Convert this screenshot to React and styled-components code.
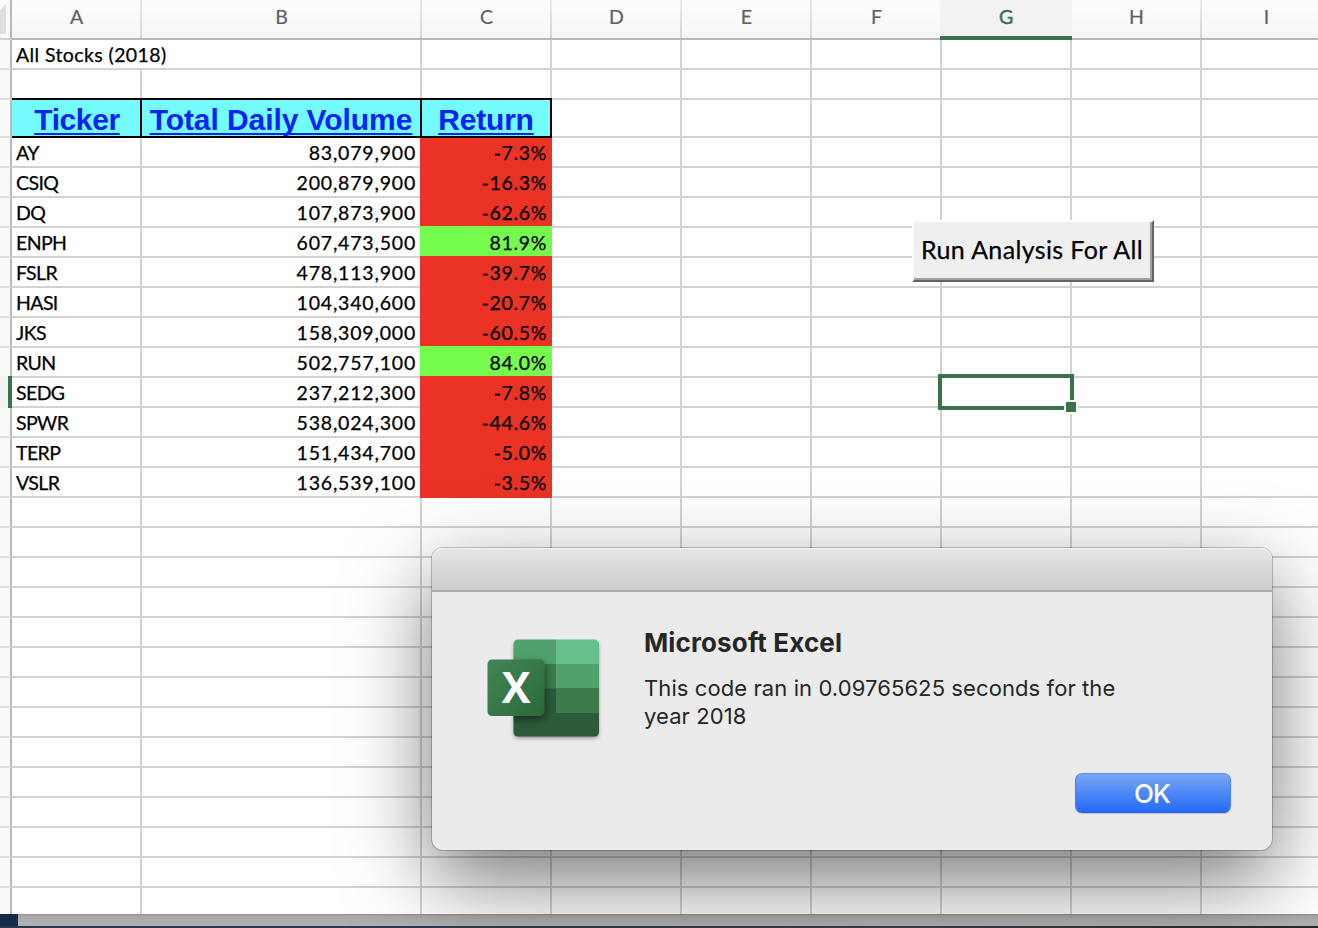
import React from "react";
import styled, { createGlobalStyle, css } from "styled-components";

const GlobalStyle = createGlobalStyle`
  *, *::before, *::after { box-sizing: border-box; }
  html, body { margin: 0; padding: 0; overflow: hidden; }
  body { background: #22303f; }
`;

const GRID = "#d2d2d2";
const GREEN = "#3a7349";
const SHEET_FONT = 'Lato, "Liberation Sans", sans-serif';

const Screen = styled.main`
  position: relative;
  display: flex;
  flex-direction: column;
  width: 1318px;
  height: 928px;
  overflow: hidden;
  font-family: ${SHEET_FONT};
  color: #000;
`;

const Sheet = styled.section`
  height: 914px;
  background: #fff;
  overflow: hidden;
`;

const HeaderRow = styled.div`
  display: flex;
  width: 1332px;
  height: 40px;
`;

const Corner = styled.div`
  display: flex;
  align-items: flex-start;
  width: 12px;
  height: 40px;
  padding-top: 3px;
  background: #fafafa;
  border-right: 2px solid #b9b9b9;
  border-bottom: 2px solid ${GRID};
`;

const ColumnHeader = styled.div`
  display: flex;
  justify-content: center;
  width: ${(p) => p.$width}px;
  height: 40px;
  padding: 5px 1px 0 0;
  font-size: 19.5px;
  line-height: 24px;
  color: #5f5f5f;
  -webkit-text-stroke: 0.2px #5f5f5f;
  background:
    linear-gradient(#ececec, #d4d4d4) right / 2px 100% no-repeat,
    linear-gradient(#fdfdfd, #f6f6f6);
  border-bottom: 2px solid #b7b7b7;
  ${(p) =>
    p.$active &&
    css`
      width: 132px;
      margin-left: -2px;
      padding-right: 0;
      color: ${GREEN};
      -webkit-text-stroke: 0.5px ${GREEN};
      background: #f2f2f2;
      border-bottom: 4px solid ${GREEN};
    `}
`;

const Row = styled.div`
  display: flex;
  width: 1332px;
  height: ${(p) => p.$height || 30}px;
`;

const RowHeader = styled.div`
  width: 12px;
  background: #fafafa;
  border-right: 2px solid #b9b9b9;
  border-bottom: 2px solid #dedede;
  ${(p) =>
    p.$active &&
    css`
      height: 32px;
      margin-top: -2px;
      background: #f2f2f2;
      border-right: 4px solid ${GREEN};
      border-bottom: 0;
    `}
`;

const Cell = styled.div`
  width: ${(p) => p.$width}px;
  padding: 1px 4px 0 4px;
  font-size: 19.5px;
  line-height: 28px;
  white-space: nowrap;
  text-align: ${(p) => p.$align || "left"};
  letter-spacing: ${(p) => p.$spacing || 0}px;
  border-right: 2px solid ${(p) => (p.$open ? "#fff" : GRID)};
  border-bottom: 2px solid ${GRID};
  -webkit-text-stroke: 0.25px #000;
`;

const ReturnCell = styled(Cell)`
  height: 32px;
  margin: -2px 0 0 -2px;
  padding: 3px 5px 0 0;
  border: 0;
  background: ${(p) => (p.$gain ? "#75fb4c" : "#ea3324")};
`;

const TitleRow = styled(Row)`
  position: relative;
  z-index: 1;
`;

const TitleCell = styled.div`
  width: ${(p) => p.$width}px;
  height: 40px;
  margin-top: -2px;
  padding-left: ${(p) => p.$inset || 0}px;
  font-family: "Liberation Sans", Arial, sans-serif;
  font-size: 30px;
  font-weight: 700;
  line-height: 40px;
  letter-spacing: ${(p) => p.$spacing}px;
  text-align: center;
  white-space: nowrap;
  color: #0a22f5;
  background: #74fbfd;
  border: solid #000;
  border-width: 2px 2px 2px 0;
`;

const TitleText = styled.span`
  text-decoration: underline;
  text-decoration-thickness: 2px;
  text-underline-offset: 3px;
  text-decoration-skip-ink: none;
`;

const MacroButton = styled.button`
  position: absolute;
  left: 912px;
  top: 220px;
  width: 242px;
  height: 62px;
  padding: 0 2px 4px 0;
  border: 2px solid;
  border-color: #fff #636363 #636363 #fff;
  box-shadow: inset -2px -2px 0 #a0a0a0;
  background: #efefef;
  font-family: ${SHEET_FONT};
  font-size: 25px;
  line-height: 54px;
  letter-spacing: 0.37px;
  color: #000;
  white-space: nowrap;
  -webkit-text-stroke: 0.25px #000;
`;

const Selection = styled.div`
  position: absolute;
  left: 938px;
  top: 374px;
  width: 136px;
  height: 36px;
  border: 4px solid ${GREEN};
`;

const FillHandle = styled.div`
  position: absolute;
  right: -8px;
  bottom: -8px;
  width: 14px;
  height: 14px;
  background: ${GREEN};
  border: 2px solid #fff;
`;

const WindowEdge = styled.footer`
  display: flex;
  height: 14px;
  padding-bottom: 2px;
  background: linear-gradient(90deg, #27374a, #36404c 70%, #2a2530);
`;

const Desktop = styled.div`
  width: 18px;
  background: #142c4a;
`;

const ScrollStrip = styled.div`
  flex: 1;
  background: linear-gradient(#8e8e8e 0, #a8a8a8 2px, #b3b3b3 12px);
`;

const Dialog = styled.section`
  position: absolute;
  left: 432px;
  top: 548px;
  display: flex;
  flex-direction: column;
  width: 840px;
  height: 302px;
  border-radius: 11px;
  background: #ebebeb;
  box-shadow: 0 0 0 1px rgba(0, 0, 0, 0.22), 0 30px 84px rgba(0, 0, 0, 0.54);
  font-family: Inter, "Liberation Sans", sans-serif;
  color: #262626;
`;

const DialogBar = styled.div`
  height: 44px;
  border-radius: 11px 11px 0 0;
  border-bottom: 2px solid #acacac;
  background: linear-gradient(#e6e6e6, #cdcdcd);
  box-shadow: inset 0 1px 0 #f5f5f5;
`;

const DialogBody = styled.div`
  display: flex;
  padding: 33px 0 0 50px;
`;

const Message = styled.div`
  padding-left: 40px;
`;

const DialogTitle = styled.h1`
  margin: 0;
  font-size: 26px;
  font-weight: 700;
  line-height: 36px;
  letter-spacing: 0.13px;
`;

const DialogText = styled.p`
  width: 490px;
  margin: 13px 0 0;
  font-size: 22px;
  line-height: 28px;
  letter-spacing: 0.09px;
`;

const OkButton = styled.button`
  align-self: flex-end;
  width: 156px;
  height: 40px;
  margin: auto 41px 37px 0;
  padding: 2px 2px 0 0;
  border: 1px solid;
  border-color: #5c98f0 #4482ef #2463e8;
  border-radius: 7px;
  background: linear-gradient(#77a7f5, #2469f7);
  box-shadow: 0 1px 1px rgba(0, 0, 0, 0.18);
  font-family: Inter, "Liberation Sans", sans-serif;
  font-size: 26px;
  font-weight: 500;
  line-height: 36px;
  letter-spacing: -0.8px;
  color: #fff;
`;

const LogoLetter = styled.text`
  font-family: "Open Sans", sans-serif;
  font-size: 43px;
  font-weight: 700;
  fill: #fff;
`;

function ExcelLogo() {
  return (
    <svg width="122" height="120" viewBox="0 0 122 120" aria-hidden="true">
      <defs>
        <linearGradient id="tile" x1="0" y1="0" x2="1" y2="1">
          <stop offset="0" stopColor="#418656" />
          <stop offset="1" stopColor="#2d6938" />
        </linearGradient>
        <clipPath id="book">
          <rect x="31.5" y="14.5" width="85.5" height="97" rx="4.5" />
        </clipPath>
        <filter id="soft" x="-30%" y="-30%" width="160%" height="160%">
          <feGaussianBlur stdDeviation="2" />
        </filter>
        <filter id="wide" x="-30%" y="-30%" width="160%" height="160%">
          <feGaussianBlur stdDeviation="4" />
        </filter>
      </defs>
      <rect x="32" y="18" width="84.5" height="95" rx="4" fill="#000" opacity=".4" filter="url(#soft)" />
      <g clipPath="url(#book)">
        <rect x="31" y="14" width="43" height="25" fill="#50a16b" />
        <rect x="74" y="14" width="44" height="25" fill="#65c189" />
        <rect x="31" y="39" width="43" height="25" fill="#3a7b49" />
        <rect x="74" y="39" width="44" height="25" fill="#50a16b" />
        <rect x="31" y="63.5" width="87" height="50" fill="#2d5b3a" />
        <rect x="74" y="63.5" width="44" height="24.5" fill="#3a7b49" />
        <rect x="6" y="38" width="57" height="56" rx="4" fill="#000" opacity=".5" filter="url(#wide)" />
      </g>
      <rect x="5.5" y="34.5" width="57" height="56.5" rx="4.5" fill="url(#tile)" />
      <LogoLetter x="34" y="78" textAnchor="middle">X</LogoLetter>
    </svg>
  );
}

const columns = [
  ["A", 130], ["B", 280], ["C", 130], ["D", 130], ["E", 130],
  ["F", 130], ["G", 130], ["H", 130], ["I", 130],
];

const stocks = [
  ["AY", "83,079,900", "-7.3%"],
  ["CSIQ", "200,879,900", "-16.3%"],
  ["DQ", "107,873,900", "-62.6%"],
  ["ENPH", "607,473,500", "81.9%"],
  ["FSLR", "478,113,900", "-39.7%"],
  ["HASI", "104,340,600", "-20.7%"],
  ["JKS", "158,309,000", "-60.5%"],
  ["RUN", "502,757,100", "84.0%"],
  ["SEDG", "237,212,300", "-7.8%"],
  ["SPWR", "538,024,300", "-44.6%"],
  ["TERP", "151,434,700", "-5.0%"],
  ["VSLR", "136,539,100", "-3.5%"],
];

function EmptyCells({ from = 0 }) {
  return columns.slice(from).map(([name, width]) => <Cell key={name} $width={width} />);
}

export default function App() {
  return (
    <>
      <GlobalStyle />
      <Screen>
        <Sheet>
          <HeaderRow>
            <Corner>
              <svg width="6" height="31" viewBox="0 0 6 31" aria-hidden="true">
                <path d="M6 1V31H0V7Z" fill="#dedede" />
              </svg>
            </Corner>
            {columns.map(([name, width]) => (
              <ColumnHeader key={name} $width={width} $active={name === "G"}>{name}</ColumnHeader>
            ))}
          </HeaderRow>
          <Row>
            <RowHeader />
            <Cell $width={410} $spacing={0.4}>All Stocks (2018)</Cell>
            <EmptyCells from={2} />
          </Row>
          <Row>
            <RowHeader />
            <EmptyCells />
          </Row>
          <TitleRow $height={38}>
            <RowHeader />
            <TitleCell $width={130} $spacing={-0.4} $inset={2}><TitleText>Ticker</TitleText></TitleCell>
            <TitleCell $width={280} $spacing={-0.07}><TitleText>Total Daily Volume</TitleText></TitleCell>
            <TitleCell $width={130} $spacing={-0.2}><TitleText>Return</TitleText></TitleCell>
            <EmptyCells from={3} />
          </TitleRow>
          {stocks.map(([ticker, volume, change]) => (
            <Row key={ticker}>
              <RowHeader $active={ticker === "SEDG"} />
              <Cell $width={130} $spacing={-0.6}>{ticker}</Cell>
              <Cell $width={280} $align="right" $spacing={0.8}>{volume}</Cell>
              <ReturnCell $width={132} $align="right" $spacing={0.65} $gain={!change.startsWith("-")}>
                {change}
              </ReturnCell>
              <EmptyCells from={3} />
            </Row>
          ))}
          {Array.from({ length: 14 }, (_, i) => (
            <Row key={i}>
              <RowHeader />
              <EmptyCells />
            </Row>
          ))}
        </Sheet>
        <WindowEdge>
          <Desktop />
          <ScrollStrip />
        </WindowEdge>
        <MacroButton>Run Analysis For All</MacroButton>
        <Selection>
          <FillHandle />
        </Selection>
        <Dialog>
          <DialogBar />
          <DialogBody>
            <ExcelLogo />
            <Message>
              <DialogTitle>Microsoft Excel</DialogTitle>
              <DialogText>This code ran in 0.09765625 seconds for the year 2018</DialogText>
            </Message>
          </DialogBody>
          <OkButton>OK</OkButton>
        </Dialog>
      </Screen>
    </>
  );
}
